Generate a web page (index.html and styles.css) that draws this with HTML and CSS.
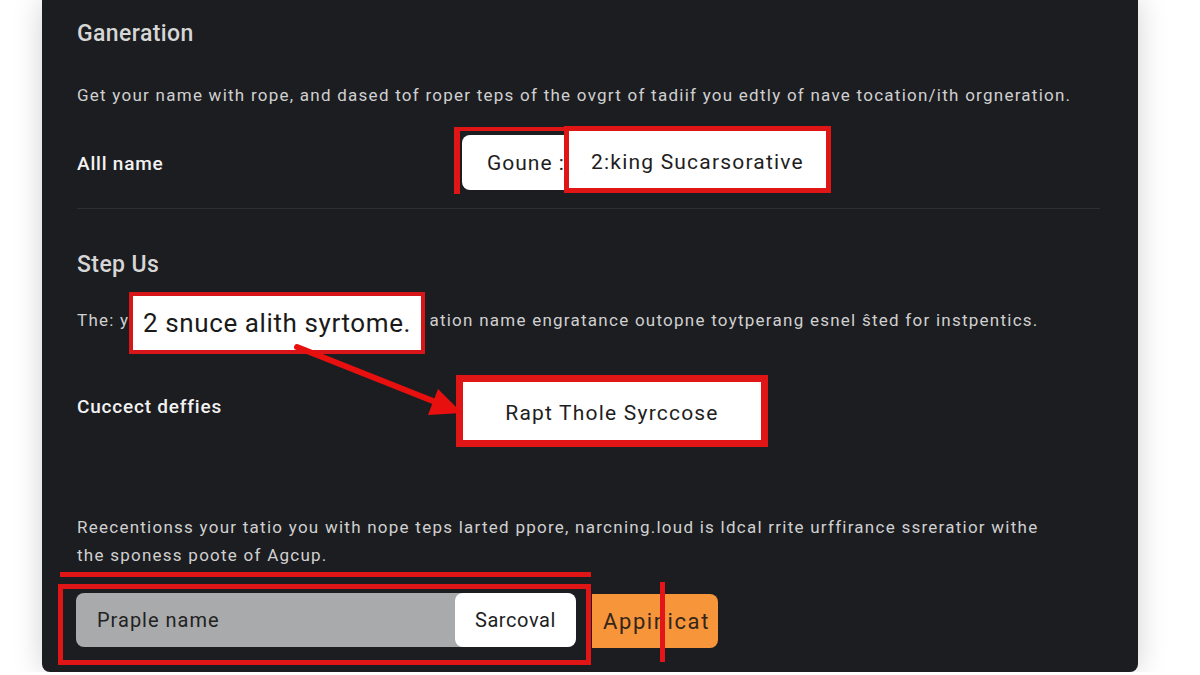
FILE: index.html
```html
<!DOCTYPE html>
<html lang="en">

<head>
    <meta charset="UTF-8">
    <meta name="viewport" content="width=device-width, initial-scale=1.0">
    <title>Ganeration</title>
    <link rel="stylesheet" href="styles.css">
</head>

<body>
    <div class="panel">
        <h2 class="title">Ganeration</h2>
        <p class="text">Get your name with rope, and dased tof roper teps of the ovgrt of tadiif you edtly of nave tocation/ith orgneration.</p>

        <div class="field">
            <span class="label">Alll name</span>
            <div class="choice">
                <div class="frame">
                    <button class="btn">Goune :</button>
                </div>
                <div class="mark mark-wide">2:king Sucarsorative</div>
            </div>
        </div>

        <hr class="rule">

        <h2 class="title title-step">Step Us</h2>
        <p class="text text-step">The: y<span class="masked"></span>ation name engratance outopne toytperang esnel ŝted for instpentics.
            <span class="callout">2 snuce alith syrtome.</span>
        </p>

        <div class="field field-tall">
            <span class="label label-up">Cuccect deffies</span>
            <div class="mark mark-big">Rapt Thole Syrccose</div>
        </div>

        <!-- annotation arrow -->
        <svg class="arrow" width="1096" height="672" viewBox="0 0 1096 672">
            <line x1="255" y1="347" x2="396" y2="403" stroke="#e8100f" stroke-width="6" stroke-linecap="round" />
            <polygon points="420,413 396,389 386,415" fill="#e8100f" />
        </svg>

        <p class="text text-long">Reecentionss your tatio you with nope teps larted ppore, narcning.loud is ldcal rrite urffirance ssreratior withe<br>the sponess poote of Agcup.</p>

        <div class="actions">
            <div class="input-frame">
                <div class="input">
                    <span class="input-text">Praple name</span>
                    <span class="input-end">Sarcoval</span>
                </div>
            </div>
            <button class="apply">Appinicat</button>
            <span class="cut"></span>
        </div>
    </div>
</body>

</html>
```

FILE: styles.css
```css
/* General Styles */
body {
    margin: 0;
    padding: 0;
    background-color: #fff;
    font-family: Roboto, "Liberation Sans", Arial, sans-serif;
    color: #d2d2d2;
    overflow: hidden;
}

.panel {
    position: relative;
    box-sizing: border-box;
    width: 1096px;
    height: 672px;
    margin: 0 0 0 42px;
    padding: 20px 38px 0 35px;
    background-color: #1c1d21;
    border-radius: 0 0 8px 8px;
    box-shadow: 0 0 30px rgba(0, 0, 0, 0.18);
}

.title {
    margin: 0;
    font-size: 23px;
    line-height: 28px;
    font-weight: 500;
    letter-spacing: 0.4px;
    color: #d6d6d6;
}

.text {
    margin: 35px 0 0;
    font-size: 17px;
    line-height: 24px;
    letter-spacing: 1.25px;
    color: #d0d0d0;
}

/* Rows */
.field {
    display: grid;
    grid-template-columns: 377px auto;
    align-items: center;
    margin-top: 20px;
}

.label {
    padding-top: 5px;
    font-size: 19px;
    font-weight: 500;
    letter-spacing: 0.8px;
    color: #f2f2f2;
}

.choice {
    display: flex;
    align-items: flex-start;
}

.frame {
    border-left: 6px solid #e01515;
    border-top: 4px solid #e01515;
    padding: 4px 0 4px 2px;
}

.btn {
    width: 114px;
    height: 55px;
    padding: 0 0 0 25px;
    text-align: left;
    border: none;
    border-radius: 8px 0 0 8px;
    background-color: #fff;
    font-family: inherit;
    font-size: 21px;
    letter-spacing: 1px;
    color: #1e1e1e;
}

.mark {
    position: relative;
    box-sizing: border-box;
    display: flex;
    align-items: center;
    justify-content: center;
    background-color: #fff;
    border: 5px solid #e01515;
    font-size: 21px;
    letter-spacing: 1.2px;
    color: #1e1e1e;
}

.mark-wide {
    width: 267px;
    height: 67px;
    margin-left: -12px;
    margin-top: -1px;
    padding-top: 4px;
}

.rule {
    margin: 14px 0 0;
    border: none;
    border-top: 1px solid #2e2f34;
}

.title-step {
    margin-top: 42px;
}

.text-step {
    position: relative;
    margin-top: 29px;
    white-space: nowrap;
}

.masked {
    display: inline-block;
    width: 300px;
}

.callout {
    position: absolute;
    left: 52px;
    top: -16px;
    box-sizing: border-box;
    width: 296px;
    height: 62px;
    display: flex;
    align-items: center;
    justify-content: center;
    background-color: #fff;
    border: 4px solid #d8161a;
    font-size: 26px;
    letter-spacing: 0.6px;
    color: #1a1a1a;
}

.field-tall {
    margin-top: 43px;
    grid-template-columns: 379px auto;
}

.label-up {
    padding: 0 0 9px;
}

.mark-big {
    width: 312px;
    height: 72px;
    border-width: 7px;
    padding-top: 4px;
}

.arrow {
    position: absolute;
    left: 0;
    top: 0;
    pointer-events: none;
}

.text-long {
    margin-top: 66px;
    line-height: 28px;
}

/* Bottom bar */
.actions {
    position: relative;
    display: flex;
    align-items: flex-start;
    margin-top: 15px;
}

.input-frame {
    position: relative;
    margin-left: -19px;
    padding: 4px 10px 13px 13px;
    border: 5px solid #e01515;
}

.input-frame::before {
    content: "";
    position: absolute;
    left: -3px;
    right: -5px;
    top: -17px;
    height: 5px;
    background-color: #e01515;
}

.input {
    display: flex;
    justify-content: space-between;
    width: 500px;
    height: 54px;
    border-radius: 8px;
    background-color: #a9aaab;
    overflow: hidden;
}

.input-text {
    display: flex;
    align-items: center;
    padding-left: 21px;
    font-size: 20px;
    letter-spacing: 1px;
    color: #222;
}

.input-end {
    display: flex;
    align-items: center;
    justify-content: center;
    width: 121px;
    border-radius: 8px;
    background-color: #fff;
    font-size: 20px;
    letter-spacing: 0.6px;
    color: #1e1e1e;
}

.apply {
    width: 126px;
    height: 54px;
    margin: 10px 0 0 1px;
    padding: 0 0 0 11px;
    text-align: left;
    border: none;
    border-radius: 0 8px 8px 0;
    background-color: #f7953b;
    font-family: inherit;
    font-size: 22px;
    letter-spacing: 1.6px;
    color: #33261a;
}

.cut {
    position: absolute;
    left: 583px;
    top: -2px;
    width: 5px;
    height: 80px;
    background-color: #e3141a;
}
```
